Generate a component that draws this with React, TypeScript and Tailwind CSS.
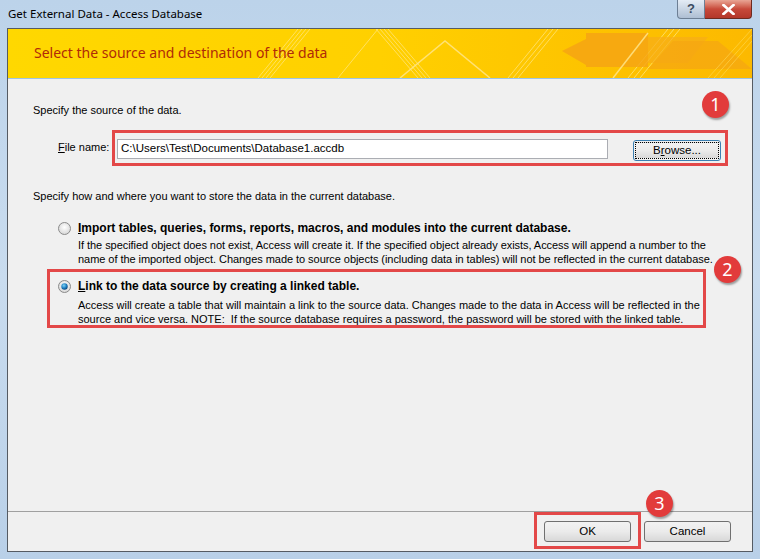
import React from "react";

const F = { fontFamily: '"Liberation Sans", Arial, sans-serif' };

function Badge({ n, className }: { n: string; className: string }) {
  return (
    <div
      className={`absolute w-[27px] h-[27px] rounded-full bg-[#e23b3b] text-white flex items-center justify-center text-[18px] shadow-[1px_2px_2px_rgba(0,0,0,0.35)] ${className}`}
      style={{ fontFamily: '"Noto Sans", "Open Sans", sans-serif' }}
    >
      {n}
    </div>
  );
}

function Radio({ checked }: { checked?: boolean }) {
  return (
    <svg width="13" height="13" viewBox="0 0 13 13" className="shrink-0">
      <defs>
        <radialGradient id={checked ? "rg1" : "rg0"} cx="50%" cy="40%" r="60%">
          <stop offset="0%" stopColor="#ffffff" />
          <stop offset="100%" stopColor="#d6d6d6" />
        </radialGradient>
        <radialGradient id="dot" cx="40%" cy="35%" r="70%">
          <stop offset="0%" stopColor="#7fd3f5" />
          <stop offset="60%" stopColor="#1a7bbf" />
          <stop offset="100%" stopColor="#0a3f70" />
        </radialGradient>
      </defs>
      <circle cx="6.5" cy="6.5" r="6" fill={`url(#${checked ? "rg1" : "rg0"})`} stroke="#8a8a8a" strokeWidth="1" />
      {checked && <circle cx="6.5" cy="6.5" r="3.2" fill="url(#dot)" />}
    </svg>
  );
}

function Banner() {
  return (
    <div className="relative h-[49px] bg-gradient-to-r from-[#ffd800] via-[#ffd000] to-[#fcb900] overflow-hidden">
      <svg className="absolute inset-0" width="744" height="49" viewBox="0 0 744 49">
        <g stroke="#ffe680" strokeWidth="1" opacity="0.75">
          <line x1="250" y1="49" x2="290" y2="0" />
          <line x1="254" y1="49" x2="294" y2="0" />
          <line x1="258" y1="49" x2="298" y2="0" />
          <line x1="262" y1="49" x2="302" y2="0" />
          <line x1="330" y1="49" x2="370" y2="0" />
          <line x1="368" y1="0" x2="410" y2="49" />
          <line x1="372" y1="0" x2="414" y2="49" />
          <line x1="376" y1="0" x2="418" y2="49" />
          <line x1="380" y1="0" x2="422" y2="49" />
          <line x1="500" y1="49" x2="540" y2="0" />
          <line x1="505" y1="49" x2="545" y2="0" />
          <line x1="510" y1="49" x2="550" y2="0" />
          <line x1="620" y1="49" x2="660" y2="0" />
          <line x1="626" y1="49" x2="666" y2="0" />
          <line x1="632" y1="49" x2="672" y2="0" />
        </g>
        <polygon points="554,22 578,10 578,4 640,4 640,38 578,38 578,36" fill="#f5a214" opacity="0.8" />
        <polygon points="640,8 700,8 680,34 640,34" fill="#f7ad18" opacity="0.7" />
        <polygon points="665,12 710,12 744,40 640,40" fill="#f6a712" opacity="0.75" />
        <g stroke="#ffe58a" strokeWidth="1.5" fill="none" opacity="0.85">
          <polyline points="392,49 437,12 482,49" />
          <line x1="605" y1="49" x2="640" y2="4" />
        </g>
        <g stroke="#ffe066" strokeWidth="1" opacity="0.5">
          <line x1="700" y1="49" x2="744" y2="0" />
          <line x1="706" y1="49" x2="744" y2="6" />
          <line x1="712" y1="49" x2="744" y2="12" />
        </g>
      </svg>
      <div
        className="relative pl-[26px] pt-[14px] text-[14px] text-[#b02a08] leading-[20px]"
        style={{ fontFamily: '"Noto Sans", "Open Sans", sans-serif' }}
      >
        Select the source and destination of the data
      </div>
    </div>
  );
}

function Btn({ label, className = "" }: { label: React.ReactNode; className?: string }) {
  return (
    <div
      className={`h-[21px] rounded-[3px] border border-[#707070] bg-gradient-to-b from-[#f2f2f2] via-[#ebebeb] to-[#d8d8d8] flex items-center justify-center text-[11.5px] text-black ${className}`}
    >
      {label}
    </div>
  );
}

export default function App() {
  return (
    <div
      className="w-[760px] h-[559px] bg-gradient-to-b from-[#bcd3ea] via-[#c9dcef] to-[#b9d0e8] flex flex-col overflow-hidden"
      style={F}
    >
      {/* title bar */}
      <div className="h-[28px] flex items-start relative shrink-0">
        <div
          className="pl-[8px] pt-[5px] text-[11.5px] text-black leading-[18px]"
          style={{ fontFamily: '"Noto Sans", "Open Sans", sans-serif' }}
        >
          Get External Data - Access Database
        </div>
        <div className="absolute left-[677px] top-0 flex">
          <div className="w-[28px] h-[19px] rounded-bl-[4px] border border-[#6d7f94] border-t-0 bg-gradient-to-b from-[#e4ecf5] to-[#aebfd3] flex items-center justify-center text-[13px] font-bold text-[#3b4b60]">
            ?
          </div>
          <div className="w-[47px] h-[19px] rounded-br-[4px] border border-[#6d2a20] border-t-0 border-l-0 bg-gradient-to-b from-[#e8a595] via-[#c7493a] to-[#b3372a] flex items-center justify-center text-white">
            <svg width="13" height="11" viewBox="0 0 13 11">
              <path d="M1.5 1 L11.5 10 M11.5 1 L1.5 10" stroke="#ffffff" strokeWidth="2.6" strokeLinecap="square" />
            </svg>
          </div>
        </div>
      </div>

      {/* client */}
      <div className="mx-[7px] mb-[7px] flex-1 border border-[#555b63] bg-[#f0f0f0] flex flex-col relative">
        <Banner />
        <div className="h-[1px] bg-[#9ec4e6]" />
        <div className="flex-1 flex flex-col text-[11px] text-black relative">
          <div className="pl-[25px] pt-[24px] leading-[14px]">Specify the source of the data.</div>

          <div className="flex items-start mt-[13px]">
            <div className="pl-[50px] w-[104px] pt-[10px] leading-[14px]">
              <span className="underline">F</span>ile name:
            </div>
            <div className="border-[3px] border-[#e34848] pl-[2px] pr-[4px] pt-[6px] pb-[2px] flex items-start">
              <div className="w-[491px] h-[20px] bg-white border border-[#abadb3] flex items-center pl-[3px] text-[11.5px]">
                C:\Users\Test\Documents\Database1.accdb
              </div>
              <div className="ml-[25px] w-[88px] h-[21px] mt-[1px] rounded-[3px] border border-[#3c7fb1] p-[1px]">
                <div className="w-full h-full border border-dotted border-black bg-gradient-to-b from-[#f2f2f2] via-[#ebebeb] to-[#d9d9d9] flex items-center justify-center text-[11.5px]">
                  B<span className="underline">r</span>owse...
                </div>
              </div>
            </div>
          </div>

          <div className="pl-[25px] pt-[23px] leading-[14px]">
            Specify how and where you want to store the data in the current database.
          </div>

          <div className="pl-[50px] pt-[18px] flex items-start gap-[7px]">
            <div className="pt-[1px]">
              <Radio />
            </div>
            <div className="flex flex-col">
              <div className="font-bold text-[12px] leading-[14px]">
                <span className="underline">I</span>mport tables, queries, forms, reports, macros, and modules into the current database.
              </div>
              <div className="leading-[14px] mt-[3px] tracking-[-0.05px]">
                If the specified object does not exist, Access will create it. If the specified object already exists, Access will append a number to the
                <br />
                name of the imported object. Changes made to source objects (including data in tables) will not be reflected in the current database.
              </div>
            </div>
          </div>

          <div className="ml-[39px] mt-[3px] w-[659px] h-[59px] border-[3px] border-[#e34848] pl-[8px] pt-[7px] flex items-start gap-[7px]">
            <div className="pt-[1px]">
              <Radio checked />
            </div>
            <div className="flex flex-col">
              <div className="font-bold text-[12px] leading-[14px]">
                <span className="underline">L</span>ink to the data source by creating a linked table.
              </div>
              <div className="leading-[14px] mt-[5px]">
                Access will create a table that will maintain a link to the source data. Changes made to the data in Access will be reflected in the
                <br />
                source and vice versa. NOTE:&nbsp; If the source database requires a password, the password will be stored with the linked table.
              </div>
            </div>
          </div>

          <Badge n="1" className="left-[694px] top-[12px]" />
          <Badge n="2" className="left-[706px] top-[177px]" />
        </div>

        <div className="h-[1px] bg-[#a0a0a0]" />
        <div className="h-[39px] flex items-start justify-end pr-[21px] relative">
          <div className="border-[3px] border-[#e34848] px-[7px] pt-[6px] pb-[4px]">
            <Btn label="OK" className="w-[87px]" />
          </div>
          <Btn label="Cancel" className="w-[87px] ml-[3px] mt-[9px]" />
          <Badge n="3" className="left-[638px] top-[-22px]" />
        </div>
      </div>
    </div>
  );
}
